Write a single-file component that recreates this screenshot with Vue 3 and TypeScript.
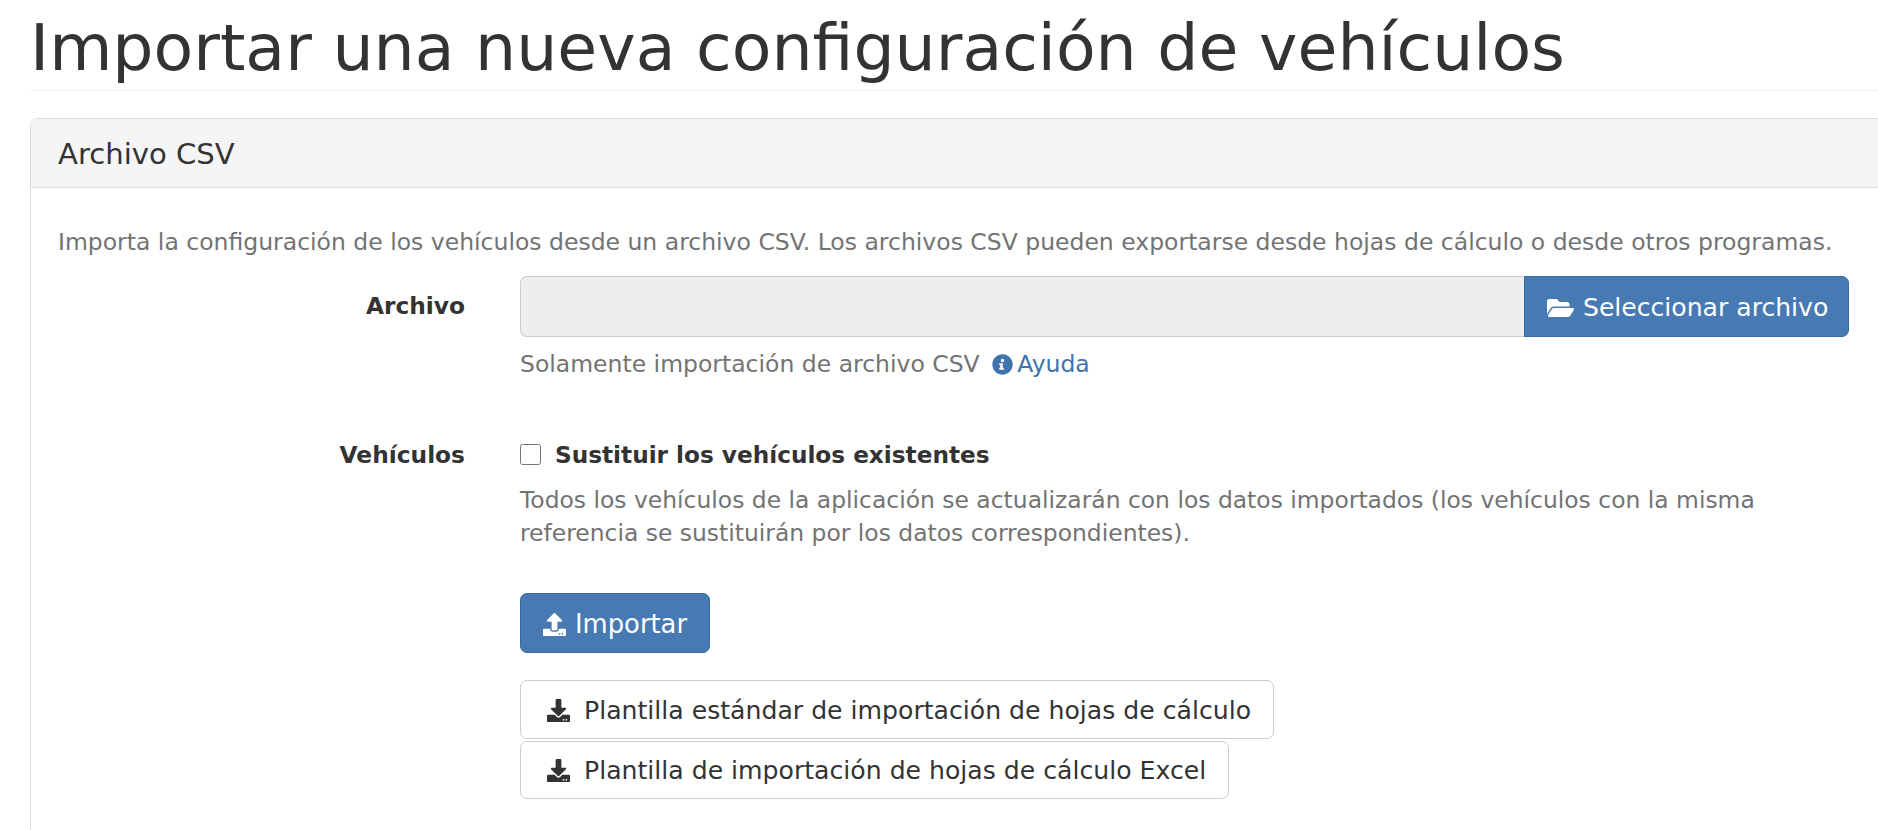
<template>
  <div class="page">
    <h1 class="page-title">Importar una nueva configuración de vehículos</h1>

    <section class="panel">
      <header class="panel-heading">Archivo CSV</header>
      <div class="panel-body">
        <p class="intro">
          Importa la configuración de los vehículos desde un archivo CSV. Los archivos CSV pueden exportarse desde hojas de cálculo o desde otros programas.
        </p>

        <div class="form-row form-row--file">
          <label class="row-label">Archivo</label>
          <div class="row-field">
            <div class="file-group">
              <div class="file-name"></div>
              <button class="btn btn-primary btn-select" type="button">
                <svg class="icon icon-folder" viewBox="0 0 576 512"><path :d="folderOpen" /></svg>
                Seleccionar archivo
              </button>
            </div>
            <p class="help">
              Solamente importación de archivo CSV
              <a class="help-link" href="#">
                <svg class="icon icon-info" viewBox="0 0 512 512"><path :d="infoCircle" /></svg>Ayuda
              </a>
            </p>
          </div>
        </div>

        <div class="form-row form-row--check">
          <label class="row-label">Vehículos</label>
          <div class="row-field">
            <label class="check">
              <input type="checkbox" />
              <span>Sustituir los vehículos existentes</span>
            </label>
            <p class="help help--wrap">
              Todos los vehículos de la aplicación se actualizarán con los datos importados (los vehículos con la misma referencia se sustituirán por los datos correspondientes).
            </p>
          </div>
        </div>

        <div class="actions">
          <button class="btn btn-primary btn-import" type="button">
            <svg class="icon" viewBox="0 0 512 512"><path :d="upload" /></svg>
            Importar
          </button>
          <div class="templates">
            <button v-for="name in templates" :key="name" class="btn btn-default" type="button">
              <svg class="icon" viewBox="0 0 512 512"><path :d="download" /></svg>
              {{ name }}
            </button>
          </div>
        </div>
      </div>
    </section>
  </div>
</template>

<script setup lang="ts">
const templates: string[] = [
  "Plantilla estándar de importación de hojas de cálculo",
  "Plantilla de importación de hojas de cálculo Excel",
];

const folderOpen =
  "M572.694 292.093L500.27 416.248A63.997 63.997 0 0 1 444.989 448H45.025c-18.523 0-30.064-20.093-20.731-36.093l72.424-124.155A64 64 0 0 1 152 256h399.964c18.523 0 30.064 20.093 20.73 36.093zM152 224h328v-48c0-26.51-21.49-48-48-48H272l-64-64H48C21.49 64 0 85.49 0 112v278.046l69.077-118.418C86.214 242.25 117.989 224 152 224z";
const infoCircle =
  "M256 8C119.043 8 8 119.083 8 256c0 136.997 111.043 248 248 248s248-111.003 248-248C504 119.083 392.957 8 256 8zm0 110c23.196 0 42 18.804 42 42s-18.804 42-42 42-42-18.804-42-42 18.804-42 42-42zm56 254c0 6.627-5.373 12-12 12h-112c-6.627 0-12-5.373-12-12v-24c0-6.627 5.373-12 12-12h12v-64h-12c-6.627 0-12-5.373-12-12v-24c0-6.627 5.373-12 12-12h64c6.627 0 12 5.373 12 12v100h12c6.627 0 12 5.373 12 12v24z";
const upload =
  "M296 384h-80c-13.3 0-24-10.7-24-24V192h-87.7c-17.8 0-26.7-21.5-14.1-34.1L242.3 5.7c7.5-7.5 19.8-7.5 27.3 0l152.2 152.2c12.6 12.6 3.7 34.1-14.1 34.1H320v168c0 13.3-10.7 24-24 24zm216-8v112c0 13.3-10.7 24-24 24H24c-13.3 0-24-10.7-24-24V376c0-13.3 10.7-24 24-24h136v8c0 30.9 25.1 56 56 56h80c30.9 0 56-25.1 56-56v-8h136c13.3 0 24 10.7 24 24zm-124 88c0-11-9-20-20-20s-20 9-20 20 9 20 20 20 20-9 20-20zm64 0c0-11-9-20-20-20s-20 9-20 20 9 20 20 20 20-9 20-20z";
const download =
  "M216 0h80c13.3 0 24 10.7 24 24v168h87.7c17.8 0 26.7 21.5 14.1 34.1L269.7 378.3c-7.5 7.5-19.8 7.5-27.3 0L90.1 226.1c-12.6-12.6-3.7-34.1 14.1-34.1H192V24c0-13.3 10.7-24 24-24zm296 376v112c0 13.3-10.7 24-24 24H24c-13.3 0-24-10.7-24-24V376c0-13.3 10.7-24 24-24h146.7l49 49c20.1 20.1 52.5 20.1 72.6 0l49-49H488c13.3 0 24 10.7 24 24zm-124 88c0-11-9-20-20-20s-20 9-20 20 9 20 20 20 20-9 20-20zm64 0c0-11-9-20-20-20s-20 9-20 20 9 20 20 20 20-9 20-20z";
</script>

<style>
html,
body {
  overflow: hidden;
  background: #fff;
}
</style>

<style scoped>
.page {
  height: 830px;
  padding-left: 30px;
  overflow: hidden;
  font-family: "DejaVu Sans", Verdana, sans-serif;
  font-size: 23.5px;
  color: #333;
}

.page-title {
  width: 1848px;
  height: 90px;
  margin: 0;
  border-bottom: 1px solid #eee;
  box-sizing: content-box;
  font-size: 64.9px;
  font-weight: 400;
  line-height: 96px;
  white-space: nowrap;
}

.panel {
  width: 1900px;
  margin-top: 27px;
  border: 1px solid #ddd;
  border-radius: 7px 0 0 7px;
}

.panel-heading {
  height: 68px;
  padding-left: 27px;
  border-bottom: 1px solid #ddd;
  background: #f5f5f5;
  border-radius: 6px 0 0 0;
  font-size: 29.1px;
  line-height: 70px;
}

.panel-body {
  padding: 0 0 60px 27px;
}

.intro {
  margin: 0;
  padding-top: 38px;
  line-height: 33px;
  color: #737373;
  white-space: nowrap;
}

.form-row {
  display: grid;
  grid-template-columns: 407px 1329px;
  column-gap: 55px;
}

.form-row--file {
  margin-top: 17px;
}

.form-row--check {
  margin-top: 57px;
}

.row-label {
  font-size: 23.3px;
  font-weight: 700;
  text-align: right;
  line-height: 60px;
}

.form-row--check .row-label {
  line-height: 33px;
}

.file-group {
  display: flex;
  height: 61px;
}

.file-name {
  flex: 1;
  background: #eee;
  border: 1px solid #ccc;
  border-right: 0;
  border-radius: 7px 0 0 7px;
}

.btn {
  display: inline-flex;
  align-items: center;
  box-sizing: border-box;
  height: 60px;
  padding: 2px 20px 0;
  border: 1px solid transparent;
  border-radius: 7px;
  font: inherit;
  font-size: 25.1px;
  white-space: nowrap;
  cursor: pointer;
}

.btn-primary {
  color: #fff;
  background: #4779b3;
  border-color: #3a6a9f;
}

.btn-select {
  width: 325px;
  height: 61px;
  padding-left: 22px;
  border-radius: 0 7px 7px 0;
}

.btn-default {
  height: 59px;
  padding: 1px 22px 0 26px;
  font-size: 25.15px;
  color: #333;
  background: #fff;
  border-color: #ccc;
}

.btn-default:last-child {
  height: 58px;
}

.btn-default .icon {
  margin-right: 14px;
}

.btn-import {
  padding: 2px 22px 0;
  font-size: 25.8px;
}

.icon {
  flex: none;
  width: 23px;
  height: 23px;
  margin-right: 9px;
  fill: currentColor;
}

.icon-folder {
  width: 27px;
  height: 24px;
}

.help {
  margin: 0;
  padding-top: 11px;
  line-height: 33px;
  color: #737373;
}

.help--wrap {
  padding-top: 13px;
  font-size: 23.43px;
}

.help-link {
  margin-left: 5px;
  color: #3f73ad;
  text-decoration: none;
}

.icon-info {
  width: 21px;
  height: 21px;
  margin-right: 4px;
  vertical-align: -3px;
  fill: #3f73ad;
}

.check {
  display: flex;
  align-items: center;
  height: 33px;
  font-size: 23.2px;
  font-weight: 700;
}

.check input {
  width: 21px;
  height: 21px;
  margin: 0 14px 0 0;
}

.actions {
  display: flex;
  flex-direction: column;
  align-items: flex-start;
  margin: 43px 0 0 462px;
}

.templates {
  display: flex;
  flex-direction: column;
  align-items: flex-start;
  gap: 2px;
  margin-top: 27px;
}
</style>
